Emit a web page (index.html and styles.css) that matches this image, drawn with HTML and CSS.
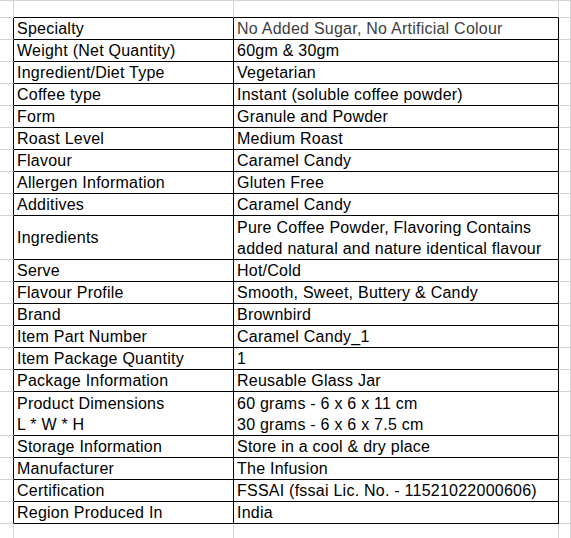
FILE: index.html
```html
<!DOCTYPE html>
<html>
<head>
<meta charset="utf-8">
<link rel="stylesheet" href="styles.css">
</head>
<body>
<div class="sheet">
  <div class="row head"><div class="stub"></div><div class="c a"></div><div class="c b"></div><div class="c x"></div></div>
  <div class="row"><div class="stub"></div><div class="c a">Specialty</div><div class="c b muted">No Added Sugar, No Artificial Colour</div><div class="c x"></div></div>
  <div class="row"><div class="stub"></div><div class="c a">Weight (Net Quantity)</div><div class="c b">60gm &amp; 30gm</div><div class="c x"></div></div>
  <div class="row"><div class="stub"></div><div class="c a">Ingredient/Diet Type</div><div class="c b">Vegetarian</div><div class="c x"></div></div>
  <div class="row"><div class="stub"></div><div class="c a">Coffee type</div><div class="c b">Instant (soluble coffee powder)</div><div class="c x"></div></div>
  <div class="row"><div class="stub"></div><div class="c a">Form</div><div class="c b">Granule and Powder</div><div class="c x"></div></div>
  <div class="row"><div class="stub"></div><div class="c a">Roast Level</div><div class="c b">Medium Roast</div><div class="c x"></div></div>
  <div class="row"><div class="stub"></div><div class="c a">Flavour</div><div class="c b">Caramel Candy</div><div class="c x"></div></div>
  <div class="row"><div class="stub"></div><div class="c a">Allergen Information</div><div class="c b">Gluten Free</div><div class="c x"></div></div>
  <div class="row"><div class="stub"></div><div class="c a">Additives</div><div class="c b">Caramel Candy</div><div class="c x"></div></div>
  <div class="row tall"><div class="stub"></div><div class="c a mid">Ingredients</div><div class="c b"><span>Pure Coffee Powder, Flavoring Contains</span><span>added natural and nature identical flavour</span></div><div class="c x"></div></div>
  <div class="row"><div class="stub"></div><div class="c a">Serve</div><div class="c b">Hot/Cold</div><div class="c x"></div></div>
  <div class="row"><div class="stub"></div><div class="c a">Flavour Profile</div><div class="c b">Smooth, Sweet, Buttery &amp; Candy</div><div class="c x"></div></div>
  <div class="row"><div class="stub"></div><div class="c a">Brand</div><div class="c b">Brownbird</div><div class="c x"></div></div>
  <div class="row"><div class="stub"></div><div class="c a">Item Part Number</div><div class="c b">Caramel Candy_1</div><div class="c x"></div></div>
  <div class="row"><div class="stub"></div><div class="c a">Item Package Quantity</div><div class="c b">1</div><div class="c x"></div></div>
  <div class="row"><div class="stub"></div><div class="c a">Package Information</div><div class="c b">Reusable Glass Jar</div><div class="c x"></div></div>
  <div class="row tall"><div class="stub"></div><div class="c a"><span>Product Dimensions</span><span>L * W * H</span></div><div class="c b"><span>60 grams - 6 x 6 x 11 cm</span><span>30 grams - 6 x 6 x 7.5 cm</span></div><div class="c x"></div></div>
  <div class="row"><div class="stub"></div><div class="c a">Storage Information</div><div class="c b">Store in a cool &amp; dry place</div><div class="c x"></div></div>
  <div class="row"><div class="stub"></div><div class="c a">Manufacturer</div><div class="c b">The Infusion</div><div class="c x"></div></div>
  <div class="row"><div class="stub"></div><div class="c a">Certification</div><div class="c b">FSSAI (fssai Lic. No. - 11521022000606)</div><div class="c x"></div></div>
  <div class="row"><div class="stub"></div><div class="c a">Region Produced In</div><div class="c b">India</div><div class="c x"></div></div>
  <div class="row tail"><div class="stub"></div><div class="c a"></div><div class="c b"></div><div class="c x"></div></div>
</div>
</body>
</html>
```
FILE: styles.css
```css
html, body {
  margin: 0;
  padding: 0;
  background: #ffffff;
}
.sheet {
  width: 571px;
  height: 538px;
  overflow: hidden;
  border-top: 1px solid #d4d4d4;
  font-family: "Liberation Sans", Arial, sans-serif;
  font-size: 16px;
  letter-spacing: 0.24px;
  color: #000000;
}
.row {
  display: grid;
  grid-template-columns: 14px 220px 325px 1fr;
  height: 22px;
}
.row.head {
  height: 17px;
}
.row.tall {
  height: 44px;
}
.stub, .c {
  box-sizing: border-box;
  border-right: 1px solid #d4d4d4;
  border-bottom: 1px solid #d4d4d4;
}
.row .stub {
  border-right-color: #000000;
}
.row.head .stub, .row.tail .stub {
  border-right-color: #d4d4d4;
}
.c {
  display: flex;
  flex-direction: column;
  justify-content: flex-end;
  padding-left: 3px;
  line-height: 21px;
  white-space: nowrap;
  overflow: hidden;
}
.c.a, .c.b {
  border-right-color: #000000;
  border-bottom-color: #000000;
}
.row.head .c.a, .row.head .c.b {
  border-right-color: #d4d4d4;
}
.row.tail .c.a, .row.tail .c.b {
  border-right-color: #d4d4d4;
  border-bottom-color: #d4d4d4;
}
.c.mid {
  justify-content: center;
}
.muted {
  color: #404040;
}
```
